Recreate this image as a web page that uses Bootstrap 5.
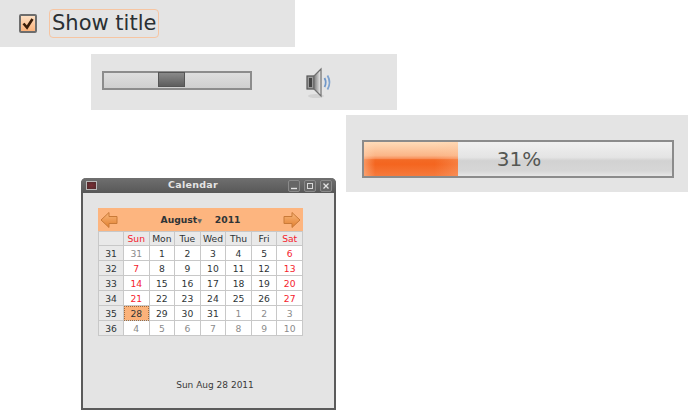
<!DOCTYPE html>
<html lang="en">

    <head>
        <meta charset="UTF-8">
        <meta name="viewport" content="width=device-width, initial-scale=1.0">
        <title>Widgets</title>
        <link href="https://cdn.jsdelivr.net/npm/bootstrap@5.3.2/dist/css/bootstrap.min.css" rel="stylesheet">
        <style>
            html, body { background: #fff; margin: 0; overflow: hidden; }
            body { width: 688px; height: 410px; font-family: "DejaVu Sans", sans-serif; }
            .stage { position: relative; width: 688px; height: 410px; }
            .shot { position: absolute; background: #e4e4e4; }
            .shot-check { left: 0; top: 0; width: 295px; height: 47px; padding-left: 19px; gap: 12px; }
            .shot-volume { left: 91px; top: 54px; width: 306px; height: 56px; padding-left: 11px; gap: 53px; }
            .shot-progress { left: 346px; top: 115px; width: 342px; height: 77px; padding: 25px 0 0 16px; }

            .tick-box { width: 18px; height: 19px; border: 2px solid #6d6d6d; border-radius: 2px; background: linear-gradient(#fde0c4, #fbb27a); }
            .tick-box svg { display: block; }
            .tick-label { height: 29px; padding: 0 2px; border: 1px solid #f6c5a2; border-radius: 4px; font-size: 21px; line-height: 26px; color: #2a3033; }

            .slide-track { position: relative; width: 150px; height: 19px; margin-top: -3px; border: 2px solid #8c8c8c; background: linear-gradient(#dedede, #cfcfcf); }
            .slide-thumb { position: absolute; left: 54px; top: -1px; width: 27px; height: 15px; border: 1px solid #555; background: linear-gradient(#8a8a8a, #5d5d5d); }

            .prog-track { width: 312px; height: 38px; border: 2px solid #8b8b8b; background: linear-gradient(#f0f0f0 0, #e4e4e4 45%, #d2d2d2 55%, #d6d6d6 85%, #e6e6e6 100%); }
            .prog-fill { width: 94px; background: linear-gradient(90deg, rgba(255, 220, 190, .4), transparent 12%, transparent 75%, rgba(255, 200, 160, .25)), linear-gradient(#ffdcb9, #fbb587 40%, #f88e58 49%, #f36a25 52%, #f4651f 65%, #f67a3c 100%); }
            .prog-text { width: 122px; text-align: center; font-size: 20px; color: #555753; line-height: 34px; }

            .win { position: absolute; left: 81px; top: 178px; width: 255px; height: 232px; border: 2px solid #5b5b5b; border-top: 0; border-radius: 5px 5px 0 0; background: #e4e4e4; }
            .win-bar { height: 15px; margin: 0 -2px; padding: 0 4px 0 5px; background: linear-gradient(#6f6f6f, #585858); border-radius: 5px 5px 0 0; }
            .win-menu { width: 11px; height: 9px; border: 1px solid #b8b8b8; background: radial-gradient(#7a2f35, #4e2a2c); }
            .win-title { font-size: 9.5px; font-weight: 700; color: #e4e4e4; letter-spacing: .3px; padding-left: 5px; }
            .win-btn { width: 12px; height: 12px; margin-left: 4px; border: 1px solid #8a8a8a; border-radius: 2px; background: #666; }
            .win-btn svg { display: block; }
            .win-body { padding: 15px 0 0 15px; }

            .cal { width: 205px; font-size: 9.2px; }
            .cal-head { height: 23px; background: #fdb57f; padding: 0 2px; color: #2e3436; font-weight: 700; }
            .cal-month { font-size: 9.2px; gap: 13px; }
            .cal-caret { font-size: 6px; color: #666; font-weight: 400; }
            .cal-table { width: 205px; table-layout: fixed; border-collapse: collapse; color: #2e3436; background: #fff; }
            .cal-table td, .cal-table th { height: 15px; padding: 0; border: 1px solid #c8c8c8; text-align: center; font-weight: 400; line-height: 13px; }
            .cal-table th { background: #e9e9e9; height: 13px; }
            .cal-table th:first-child { width: 25px; }
            .cal-table td.wk { background: #e9e9e9; }
            .cal-table .red { color: #f5222d; }
            .cal-table .dim { color: #8b8b8b; }
            .cal-table td.sel { background: #fbb27a; outline: 1px dotted #a06a3c; outline-offset: -1px; }
            .cal-foot { margin: 43px 0 0; width: 205px; padding-left: 29px; text-align: center; font-size: 9px; color: #3a3a3a; }
        </style>
    </head>

    <body>

        <div class="stage">

            <div class="shot shot-check d-flex align-items-center">
                <div class="tick-box">
                    <svg width="14" height="15" viewBox="0 0 14 15"><path d="M2.500 7.500 L6 11.500 L11.500 3" fill="none" stroke="#3a1d08" stroke-width="2.600"/></svg>
                </div>
                <div class="tick-label">Show title</div>
            </div>

            <div class="shot shot-volume d-flex align-items-center">
                <div class="slide-track"><div class="slide-thumb"></div></div>
                <svg width="28" height="33" viewBox="0 0 28 33">
                    <defs>
                        <linearGradient id="cone" x1="0" x2="1" y1="0" y2="0">
                            <stop offset="0" stop-color="#7c7c7c"/>
                            <stop offset="1" stop-color="#f2f2f2"/>
                        </linearGradient>
                    </defs>
                    <ellipse cx="11" cy="30" rx="8" ry="2" fill="#d2d2d2"/>
                    <rect x="2" y="10" width="7" height="13" fill="#9a9a9a" stroke="#555" stroke-width="1.200"/>
                    <rect x="4" y="12" width="3" height="9" fill="#444"/>
                    <path d="M9 10 L16 3 L16 30 L9 23 Z" fill="url(#cone)" stroke="#707070" stroke-width="1.200"/>
                    <path d="M19.500 12 Q22 16.500 19.500 21" fill="none" stroke="#6f97c9" stroke-width="1.800"/>
                    <path d="M22.500 9.500 Q26.500 16.500 22.500 23.500" fill="none" stroke="#7ea3d0" stroke-width="1.800"/>
                </svg>
            </div>

            <div class="shot shot-progress d-flex">
                <div class="prog-track d-flex">
                    <div class="prog-fill"></div>
                    <div class="prog-text">31%</div>
                </div>
            </div>

            <div class="win">
                <div class="win-bar d-flex align-items-center">
                    <div class="win-menu"></div>
                    <div class="win-title flex-grow-1 text-center">Calendar</div>
                    <div class="win-btn"><svg width="10" height="10" viewBox="0 0 10 10"><path d="M2 7.500 H8" stroke="#e4e4e4" stroke-width="1.400"/></svg></div>
                    <div class="win-btn"><svg width="10" height="10" viewBox="0 0 10 10"><rect x="2.500" y="2.500" width="5" height="5" fill="none" stroke="#d8d8d8"/></svg></div>
                    <div class="win-btn"><svg width="10" height="10" viewBox="0 0 10 10"><path d="M2.500 2.500 L7.500 7.500 M7.500 2.500 L2.500 7.500" stroke="#e4e4e4" stroke-width="1.300"/></svg></div>
                </div>
                <div class="win-body">
                    <div class="cal">
                        <div class="cal-head d-flex align-items-center justify-content-between">
                            <svg width="18" height="18" viewBox="0 0 18 18">
                                <defs>
                                    <linearGradient id="arrow" x1="0" x2="0" y1="0" y2="1">
                                        <stop offset="0" stop-color="#f8b77c"/>
                                        <stop offset="1" stop-color="#e2802f"/>
                                    </linearGradient>
                                </defs>
                                <path d="M1 9 L9 1.500 V5.500 H17 V12.500 H9 V16.500 Z" fill="url(#arrow)" stroke="#c97a38" stroke-linejoin="round"/>
                            </svg>
                            <div class="cal-month d-flex align-items-center">
                                <span>August<span class="cal-caret">&#9660;</span></span>
                                <span>2011</span>
                            </div>
                            <svg width="18" height="18" viewBox="0 0 18 18"><path d="M17 9 L9 1.500 V5.500 H1 V12.500 H9 V16.500 Z" fill="url(#arrow)" stroke="#c97a38" stroke-linejoin="round"/></svg>
                        </div>
                        <table class="cal-table" id="calTable"></table>
                    </div>
                    <p class="cal-foot">Sun Aug 28 2011</p>
                </div>
            </div>

        </div>

        <script>

            const names = ["Sun", "Mon", "Tue", "Wed", "Thu", "Fri", "Sat"];
            const weeks = [
                [31, [31, 1, 2, 3, 4, 5, 6]],
                [32, [7, 8, 9, 10, 11, 12, 13]],
                [33, [14, 15, 16, 17, 18, 19, 20]],
                [34, [21, 22, 23, 24, 25, 26, 27]],
                [35, [28, 29, 30, 31, 1, 2, 3]],
                [36, [4, 5, 6, 7, 8, 9, 10]]
            ];

            let html = "<tr><th></th>";
            names.forEach((n, i) => {
                html += `<th class="${i === 0 || i === 6 ? "red" : ""}">${n}</th>`;
            });
            html += "</tr>";

            weeks.forEach(([wk, days], row) => {
                html += `<tr><td class="wk">${wk}</td>`;
                days.forEach((d, i) => {
                    // days outside August are greyed out
                    const other = (row === 0 && d > 20) || (row >= 4 && d < 20);
                    let cls = other ? "dim" : (i === 0 || i === 6 ? "red" : "");
                    if (d === 28 && row === 4) cls = "sel";
                    html += `<td class="${cls}">${d}</td>`;
                });
                html += "</tr>";
            });

            document.querySelector("#calTable").innerHTML = html;

        </script>
        <script src="https://cdn.jsdelivr.net/npm/bootstrap@5.3.2/dist/js/bootstrap.bundle.min.js"></script>

    </body>

</html>
